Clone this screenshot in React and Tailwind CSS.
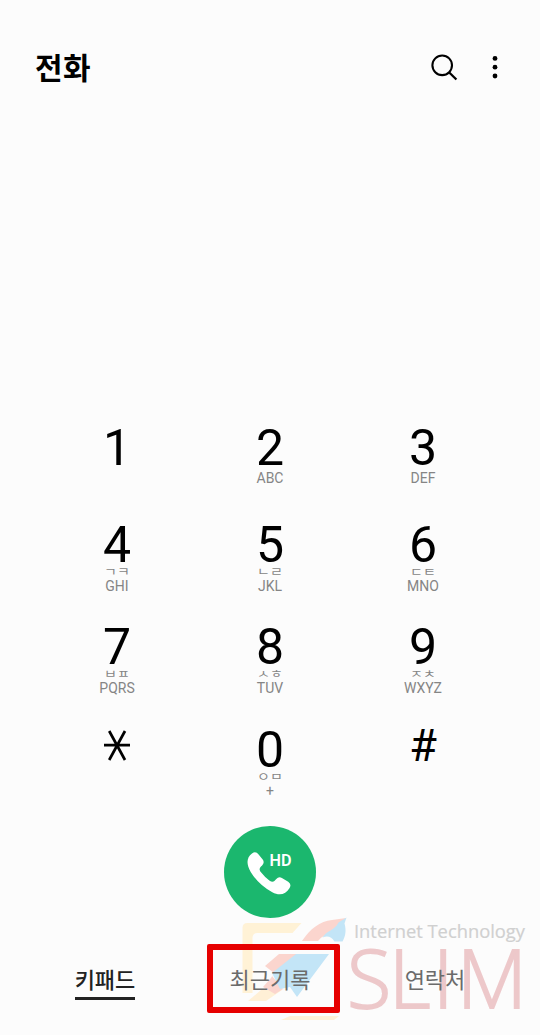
const keys = [
  { digit: '1' },
  { digit: '2', latin: 'ABC' },
  { digit: '3', latin: 'DEF' },
  { digit: '4', hangul: 'ㄱㅋ', latin: 'GHI' },
  { digit: '5', hangul: 'ㄴㄹ', latin: 'JKL' },
  { digit: '6', hangul: 'ㄷㅌ', latin: 'MNO' },
  { digit: '7', hangul: 'ㅂㅍ', latin: 'PQRS' },
  { digit: '8', hangul: 'ㅅㅎ', latin: 'TUV' },
  { digit: '9', hangul: 'ㅈㅊ', latin: 'WXYZ' },
  { digit: '*' },
  { digit: '0', hangul: 'ㅇㅁ', latin: '+' },
  { digit: '#' },
];

function Header() {
  return (
    <header className="flex h-[136px] items-center justify-between pl-[35px] pr-9">
      <h1 className="pt-0.5 text-[30px] leading-none font-bold tracking-[0.5px]">전화</h1>
      <div className="flex items-center gap-[27px]">
        <button type="button" aria-label="검색">
          <svg className="block size-[30px]" viewBox="0 0 30 30" fill="none" stroke="currentColor">
            <circle cx="13.2" cy="12.3" r="9.8" strokeWidth="2.1" />
            <path d="M20 19.3l7.4 7.2" strokeWidth="2.3" />
          </svg>
        </button>
        <button type="button" aria-label="더보기">
          <svg className="block h-[30px] w-[18px]" viewBox="0 0 18 30" fill="currentColor">
            <circle cx="9" cy="5.4" r="2.4" />
            <circle cx="9" cy="14.2" r="2.4" />
            <circle cx="9" cy="23" r="2.4" />
          </svg>
        </button>
      </div>
    </header>
  );
}

function Key({ digit, hangul, latin }) {
  if (digit === '*') {
    return (
      <button type="button" aria-label="*" className="flex justify-center pt-[5px]">
        <svg className="block h-8 w-7" viewBox="0 0 28 32" fill="none" stroke="currentColor" strokeWidth="2.7">
          <path d="M1 15.2h26M6.2 1l15.8 29M22 1L6.2 30" />
        </svg>
      </button>
    );
  }

  return (
    <button type="button" className="flex flex-col items-center">
      {digit === '#' ? (
        <span className="text-[45px] leading-[42px]">#</span>
      ) : (
        <span className="text-[50px] leading-[50px]">{digit}</span>
      )}
      {hangul && (
        <span className="-mt-1 h-3 scale-y-[0.8] text-[14px] leading-[13px] text-[#858585]">{hangul}</span>
      )}
      {latin && (
        <span className={hangul ? 'text-[14px] leading-4 text-[#858585]' : 'mt-[-3px] text-[14px] leading-4 text-[#858585]'}>
          {latin}
        </span>
      )}
    </button>
  );
}

function CallButton() {
  return (
    <button type="button" aria-label="통화" className="block size-[92px] rounded-full bg-[#1bb76e]">
      <svg className="block size-full" viewBox="0 0 92 92">
        <path
          fill="#fff"
          d="M28 27.4q3.8-2.5 6.6 1l4.1 5.2q2.2 3-.6 5.8c-3.2 2.8-3.1 4.4-.9 7.2q3.800 4.900 8.100 7.800c3 2 4.800 1.600 7-1.300q2.400-3.200 5.600-1.200l6.300 3.900q3.600 2.500 1.400 6.200c-4 6.700-10.300 8-17.300 4.200q-13.700-7.300-21.600-20.300c-4.400-7.300-4.500-14.400 1.300-18.500z"
        />
        <text x="45.5" y="40" fill="#fff" fontSize="16" fontWeight="600" textLength="22" lengthAdjust="spacingAndGlyphs">
          HD
        </text>
      </svg>
    </button>
  );
}

function Watermark() {
  return (
    <svg
      className="pointer-events-none absolute right-0 bottom-0 h-[125px] w-[300px]"
      viewBox="240 910 300 125"
      aria-hidden="true"
    >
      <path fill="#fff2d6" d="M242.5 993v-65q0-5 5-5h54l-9 10h-35q-5 0-5 5v55z" />
      <path fill="#fff0d6" d="M248 1001l13-11h21l-16 11zM281 1020l9-4h49l-5 4z" />
      <path fill="#fbd5ce" d="M265 966l14-12h19l-26 22 11 13-8 5-12-7 8-9 3-5z" />
      <path fill="#c3e5f7" d="M296 954h33l-32 43-7-10-10 2-8-16z" />
      <path fill="#fbd5ce" d="M302 941c8-12 18-20 30-21l14-2-10 10-12 8q-3 1-6 5z" />
      <path fill="#c3e5f7" d="M346.5 917.5l-2 6c2 7 1 13-2 18h-8c-3-5-7-6-12-4 4-7 12-7 16-15z" />
      <text
        className="font-['Open_Sans',sans-serif]"
        x="354"
        y="938"
        fill="#d0d0d0"
        stroke="#d0d0d0"
        strokeWidth="0.2"
        fontSize="19"
        textLength="171"
        lengthAdjust="spacingAndGlyphs"
      >
        Internet Technology
      </text>
      <text
        className="font-['Open_Sans',sans-serif]"
        x="347 389 433 457"
        y="1007.5"
        fill="#edc8ca"
        stroke="#edc8ca"
        strokeWidth="1.8"
        fontSize="81"
        fontWeight="300"
      >
        SLIM
      </text>
    </svg>
  );
}

function Tabs() {
  return (
    <nav className="relative z-10 mx-[30px] flex h-[71px] text-[22px] leading-8 text-[#6b6b6b]">
      <div className="flex w-[150px] justify-center pt-[21px]">
        <span className="h-[35px] border-b-[3px] border-[#222] font-medium text-[#222]">키패드</span>
      </div>
      <div className="mx-[27px] flex h-[69px] w-[133px] justify-center rounded-xs border-6 border-[#e60000] pt-[15px]">
        <span className="mr-[7px] whitespace-nowrap">최근기록</span>
      </div>
      <div className="flex w-[136px] justify-center pt-[21px]">
        <span>연락처</span>
      </div>
    </nav>
  );
}

export default function App() {
  return (
    <div className="relative flex h-[1035px] w-[540px] flex-col bg-[#fcfcfc] font-[Roboto,'Noto_Sans_CJK_KR',sans-serif] text-black">
      <Header />
      <main className="mt-[287px] grid h-[403px] grid-cols-[153px_153px_153px] grid-rows-[97px_102px_103px_101px] items-start justify-center">
        {keys.map((key) => (
          <Key key={key.digit} {...key} />
        ))}
      </main>
      <div className="flex h-[118px] justify-center">
        <CallButton />
      </div>
      <Tabs />
      <Watermark />
    </div>
  );
}
